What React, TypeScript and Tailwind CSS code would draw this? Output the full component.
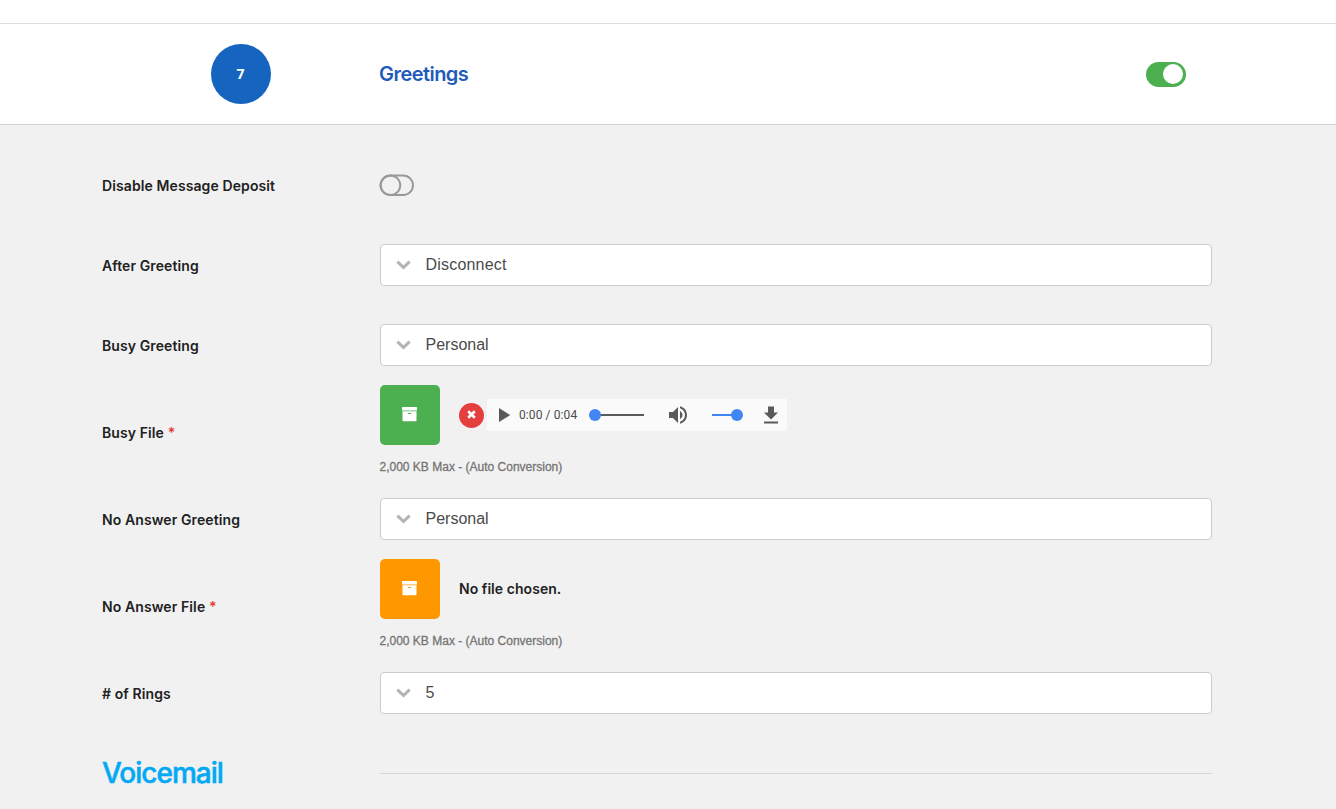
import type { ReactNode } from "react";

function Label({ children, required }: { children: ReactNode; required?: boolean }) {
  return (
    <div className="w-[278px] shrink-0 whitespace-nowrap pt-0.5 text-[14px] leading-5 font-semibold tracking-[0.1px] text-[#212121]">
      {children}
      {required && <span className="text-[#e53935]"> *</span>}
    </div>
  );
}

function SelectRow({ label, value, spacing = "tracking-normal" }: { label: string; value: string; spacing?: string }) {
  return (
    <div className="flex h-20 items-center">
      <Label>{label}</Label>
      <button className="flex h-[42px] w-[832px] items-center rounded-[4px] border border-[#cccccc] bg-white pl-[15px] text-left">
        <svg width="15" height="10" viewBox="0 0 15 10" className="shrink-0">
          <path d="M1.4 1.7 L7.5 7.5 L13.6 1.7" fill="none" stroke="#b3b3b3" strokeWidth="3" />
        </svg>
        <span className={`ml-[14.5px] font-['Liberation_Sans',sans-serif] text-[16px] leading-5 text-[#4a4a4a] ${spacing}`}>{value}</span>
      </button>
    </div>
  );
}

function ArchiveIcon() {
  return (
    <svg width="15" height="15" viewBox="0 0 15 15" fill="#fff" className="mr-px mb-px">
      <path d="M.4 0h14.2a.4.4 0 0 1 .4.4v3.1H0V.4A.4.4 0 0 1 .4 0Z" />
      <path fillRule="evenodd" d="M.5 4.3h14v9.3a.6.6 0 0 1-.6.6H1.1a.6.6 0 0 1-.6-.6V4.3ZM6.3 5.9a.5.5 0 0 0 0 1h2.4a.5.5 0 0 0 0-1Z" />
    </svg>
  );
}

function FileRow({ label, tile, children }: { label: string; tile: string; children: ReactNode }) {
  return (
    <div className="flex h-[94px] items-center">
      <Label required>{label}</Label>
      <div className="h-full">
        <div className="flex h-[60px] items-center">
          <button className={`flex size-[60px] items-center justify-center rounded-[5px] ${tile}`}>
            <ArchiveIcon />
          </button>
          {children}
        </div>
        <p className="mt-3 -ml-[0.5px] font-['Liberation_Sans',sans-serif] text-[12px] leading-5 text-[#757575] [-webkit-text-stroke:0.3px_#757575]">
          2,000 KB Max - (Auto Conversion)
        </p>
      </div>
    </div>
  );
}

function AudioPlayer() {
  return (
    <div className="flex h-8 w-[300px] items-center bg-[#fafafa]">
      <svg width="12" height="14" viewBox="0 0 12 14" className="ml-3">
        <path d="M0 0 L11.2 7 L0 14Z" fill="#5a5a5a" />
      </svg>
      <span className="ml-[8px] w-[70px] whitespace-nowrap font-[Roboto,sans-serif] text-[12px] leading-4 tracking-[0.1px] text-[#4a4a4a]">0:00 / 0:04</span>
      <svg width="55" height="12" viewBox="0 0 55 12">
        <path d="M6 6H55" stroke="#5a5a5a" strokeWidth="2" />
        <circle cx="6" cy="6" r="6" fill="#4285f4" />
      </svg>
      <svg width="24" height="24" viewBox="0 0 24 24" fill="#5a5a5a" className="ml-[22px]">
        <path d="M3 9v6h4l5 5V4L7 9H3zm13.500 3c0-1.770-1.020-3.290-2.500-4.030v8.050c1.480-.730 2.500-2.250 2.500-4.020zM14 3.230v2.060c2.890.860 5 3.540 5 6.710s-2.110 5.850-5 6.710v2.060c4.010-.910 7-4.490 7-8.770s-2.990-7.860-7-8.770z" />
      </svg>
      <svg width="31" height="12" viewBox="0 0 31 12" className="ml-[22px]">
        <path d="M0 6H25" stroke="#4285f4" strokeWidth="2" />
        <circle cx="25" cy="6" r="6" fill="#4285f4" />
      </svg>
      <svg width="24" height="24" viewBox="0 0 24 24" fill="#5a5a5a" className="ml-[16px]">
        <path d="M19 9.500h-4V3.500H9v6H5l7 7 7-7zM5 18.500v2h14v-2H5z" />
      </svg>
    </div>
  );
}

export default function App() {
  return (
    <div className="h-[809px] w-[1336px] overflow-hidden bg-[#f1f1f1] font-[Inter,sans-serif]">
      <div className="h-6 border-b border-[#dddddd] bg-white" />
      <header className="flex h-[101px] items-center border-b border-[#d0d0d0] bg-white pl-[211px]">
        <div className="flex size-[60px] items-center justify-center rounded-full bg-[#1565c0] pr-px pb-0.5 font-['Open_Sans',sans-serif] text-[14px] font-bold text-white">
          7
        </div>
        <h2 className="ml-[108px] w-[767px] text-[20px] leading-6 font-semibold tracking-[-0.55px] text-[#1e5bbb]">Greetings</h2>
        <button className="flex h-[25px] w-10 items-center justify-end rounded-full bg-[#4caf50] pr-[3px]">
          <span className="size-5 rounded-full bg-white" />
        </button>
      </header>
      <main className="pt-5 pl-[102px]">
        <div className="flex h-20 items-center">
          <Label>Disable Message Deposit</Label>
          <button className="-ml-px">
            <svg width="36" height="22" viewBox="0 0 36 22" fill="none" stroke="#999" strokeWidth="2">
              <rect x="1.500" y="1.500" width="32.500" height="19.500" rx="9.750" />
              <circle cx="11.500" cy="11.250" r="9.750" />
            </svg>
          </button>
        </div>
        <SelectRow label="After Greeting" value="Disconnect" spacing="tracking-[0.2px]" />
        <SelectRow label="Busy Greeting" value="Personal" />
        <FileRow label="Busy File" tile="bg-[#4caf50]">
          <button className="ml-[19px] mr-[3px] flex size-[25px] items-center justify-center rounded-full bg-[#e53e3e]">
            <svg width="9" height="9" viewBox="0 0 9 9" className="mr-px mb-px">
              <path d="M1.200 1.200L7.800 7.800M7.800 1.200L1.200 7.800" stroke="#fff" strokeWidth="2.700" />
            </svg>
          </button>
          <AudioPlayer />
        </FileRow>
        <SelectRow label="No Answer Greeting" value="Personal" />
        <FileRow label="No Answer File" tile="bg-[#ff9800]">
          <span className="mb-0.5 ml-[19px] text-[14px] font-semibold tracking-[0.05px] text-[#212121]">No file chosen.</span>
        </FileRow>
        <SelectRow label="# of Rings" value="5" />
        <div className="flex h-20 items-center">
          <h3 className="w-[278px] text-[28px] leading-8 font-medium tracking-[-1px] text-[#03a9f4] [-webkit-text-stroke:0.5px_#03a9f4]">Voicemail</h3>
          <hr className="w-[832px] border-[#d5d5d5]" />
        </div>
      </main>
    </div>
  );
}
